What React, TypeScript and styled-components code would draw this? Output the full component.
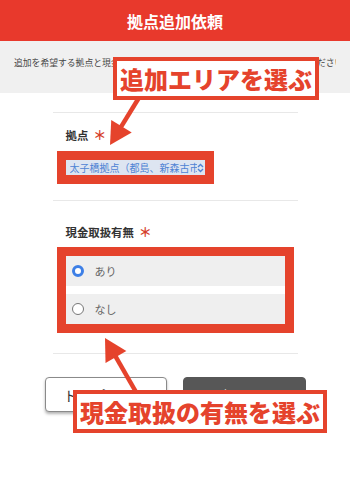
import styled, { createGlobalStyle } from "styled-components";

const GlobalStyle = createGlobalStyle`
  body {
    margin: 0;
    background: #fff;
    font-family: "Noto Sans CJK JP", "Noto Sans", sans-serif;
  }
`;

const Page = styled.div`
  position: relative;
  width: 350px;
  height: 493px;
  overflow: hidden;
  background: #fff;
`;

const Header = styled.header`
  height: 41px;
  background: #e8392c;
  color: #fff;
  display: flex;
  align-items: center;
  justify-content: center;
  font-size: 16px;
  font-weight: 700;
`;

const IntroBand = styled.div`
  height: 52px;
  box-sizing: border-box;
  padding-top: 15px;
  background: #f0f0f0;
`;

const IntroText = styled.p`
  margin: 0 14px;
  font-size: 8.8px;
  line-height: 13px;
  color: #444;
  white-space: nowrap;
  overflow: hidden;
`;

const Form = styled.form`
  width: 245px;
  margin: 19px auto 0;
  border-top: 1px solid #e8e8e8;
`;

const Section = styled.section<{ $top: number; $bottom: number }>`
  padding: ${(p) => p.$top}px 13px ${(p) => p.$bottom}px;
  border-bottom: 1px solid #e8e8e8;
`;

const Label = styled.div<{ $gap: number }>`
  display: flex;
  align-items: center;
  height: 18px;
  font-size: 11.4px;
  font-weight: 700;
  color: #333;
  margin-bottom: ${(p) => p.$gap}px;
`;

const Required = styled.span`
  color: #d63e2b;
  font-size: 13px;
  font-weight: 700;
  margin-left: 5px;
  line-height: 18px;
`;

const Highlight = styled.div<{ $fit?: boolean }>`
  width: ${(p) => (p.$fit ? "fit-content" : "auto")};
  margin: -9px;
  border: 9px solid #e5432c;
`;

const SelectBox = styled.div`
  display: flex;
  align-items: center;
  width: 139px;
  height: 15px;
  box-sizing: border-box;
  padding: 0 1px 0 4px;
  background: #dde5f1;
  color: #4f83d4;
  font-size: 10px;
  line-height: 15px;
  white-space: nowrap;
  overflow: hidden;
`;

const SelectText = styled.span`
  flex: 1;
  overflow: hidden;
`;

const OptionList = styled.div`
  display: flex;
  flex-direction: column;
  gap: 8px;
`;

const OptionRow = styled.label`
  display: flex;
  align-items: center;
  height: 30px;
  padding-left: 6px;
  gap: 11px;
  background: #efefef;
  color: #666;
  font-size: 11px;
`;

const RadioDot = styled.span<{ $checked?: boolean }>`
  width: 12px;
  height: 12px;
  box-sizing: border-box;
  border-radius: 50%;
  background: #fff;
  border: ${(p) => (p.$checked ? "3.5px solid #3d7fe6" : "1.5px solid #777")};
`;

const ButtonRow = styled.div`
  display: flex;
  justify-content: center;
  gap: 16px;
  margin-top: 23px;
`;

const Button = styled.button<{ $primary?: boolean }>`
  width: ${(p) => (p.$primary ? 123 : 122)}px;
  height: 35px;
  border-radius: 4px;
  font-family: "Noto Sans CJK JP", sans-serif;
  font-size: 14px;
  border: 1px solid ${(p) => (p.$primary ? "#575757" : "#8a8a8a")};
  background: ${(p) => (p.$primary ? "#575757" : "#fff")};
  color: ${(p) => (p.$primary ? "#fff" : "#333")};
  box-shadow: ${(p) => (p.$primary ? "none" : "0 2px 3px rgba(0,0,0,0.3)")};
  padding: 0;
`;

const Callout = styled.div<{ $x: number; $y: number }>`
  position: absolute;
  left: ${(p) => p.$x}px;
  top: ${(p) => p.$y}px;
  border: 4px solid #e5432c;
  background: #fff;
  color: #e5432c;
  font-size: 24px;
  font-weight: 900;
  padding: 0 3px;
  white-space: nowrap;
`;

const ArrowLayer = styled.svg`
  position: absolute;
  left: 0;
  top: 0;
  pointer-events: none;
`;

function Arrow({ x1, y1, x2, y2 }: { x1: number; y1: number; x2: number; y2: number }) {
  const dx = x2 - x1;
  const dy = y2 - y1;
  const len = Math.hypot(dx, dy);
  const ux = dx / len;
  const uy = dy / len;
  const bx = x2 - ux * 22;
  const by = y2 - uy * 22;
  const px = -uy * 12;
  const py = ux * 12;
  return (
    <g fill="#e5432c" stroke="#e5432c">
      <line x1={x1} y1={y1} x2={bx + ux * 2} y2={by + uy * 2} strokeWidth={4.5} />
      <polygon points={`${x2},${y2} ${bx + px},${by + py} ${bx - px},${by - py}`} stroke="none" />
    </g>
  );
}

function UpDownIcon() {
  return (
    <svg width="7" height="10" viewBox="0 0 7 10" fill="none" stroke="#4f83d4" strokeWidth="1.4">
      <path d="M1 4 L3.5 1.5 L6 4" />
      <path d="M1 6 L3.5 8.5 L6 6" />
    </svg>
  );
}

export default function App() {
  return (
    <>
      <GlobalStyle />
      <Page>
        <Header>拠点追加依頼</Header>
        <IntroBand>
          <IntroText>
            追加を希望する拠点と現金取扱の有無を選択のうえ、「確認する」を押してください。
          </IntroText>
        </IntroBand>
        <Form>
          <Section $top={13} $bottom={25}>
            <Label $gap={16}>
              拠点<Required>＊</Required>
            </Label>
            <Highlight $fit>
              <SelectBox>
                <SelectText>太子橋拠点（都島、新森古市）</SelectText>
                <UpDownIcon />
              </SelectBox>
            </Highlight>
          </Section>
          <Section $top={22} $bottom={29}>
            <Label $gap={15}>
              現金取扱有無<Required>＊</Required>
            </Label>
            <Highlight>
              <OptionList>
                <OptionRow>
                  <RadioDot $checked />
                  あり
                </OptionRow>
                <OptionRow>
                  <RadioDot />
                  なし
                </OptionRow>
              </OptionList>
            </Highlight>
          </Section>
        </Form>
        <ButtonRow>
          <Button type="button">トップへ戻る</Button>
          <Button type="button" $primary>
            確認する
          </Button>
        </ButtonRow>

        <ArrowLayer width="350" height="493">
          <Arrow x1={140} y1={96} x2={110} y2={145} />
          <Arrow x1={136} y1={392} x2={105} y2={338} />
        </ArrowLayer>
        <Callout $x={113} $y={57}>追加エリアを選ぶ</Callout>
        <Callout $x={73} $y={390}>現金取扱の有無を選ぶ</Callout>
      </Page>
    </>
  );
}
